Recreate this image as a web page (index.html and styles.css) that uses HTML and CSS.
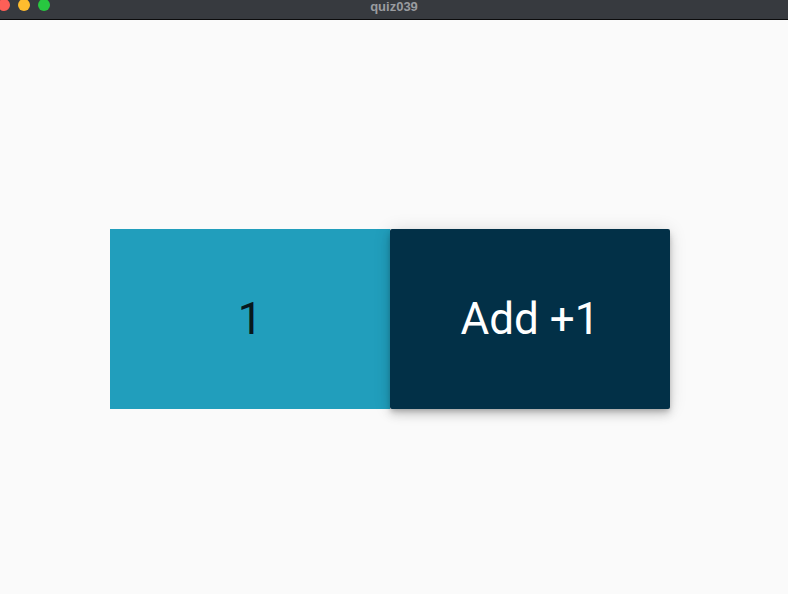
FILE: index.html
```html
<!DOCTYPE html>
<html>
<head>
<meta charset="utf-8">
<link rel="stylesheet" href="styles.css">
</head>
<body>
<div class="titlebar">
  <div class="lights">
    <span class="light red"></span>
    <span class="light yellow"></span>
    <span class="light green"></span>
  </div>
  <div class="title">quiz039</div>
</div>
<main class="content">
  <div class="row">
    <div class="count">1</div>
    <button class="add">Add +1</button>
  </div>
</main>
</body>
</html>
```
FILE: styles.css
```css
html, body {
  margin: 0;
  padding: 0;
  width: 788px;
  height: 594px;
  overflow: hidden;
  background: #fafafa;
}
.titlebar {
  position: relative;
  height: 19px;
  background: #373a3f;
  border-bottom: 1px solid #0b0b0c;
  display: flex;
  align-items: flex-start;
  justify-content: center;
}
.lights {
  position: absolute;
  left: -2px;
  top: -1px;
  display: flex;
  gap: 8px;
}
.light {
  width: 12px;
  height: 12px;
  border-radius: 50%;
  display: block;
}
.red { background: #fe5f57; }
.yellow { background: #febc2e; }
.green { background: #28c840; }
.title {
  font-family: "Liberation Sans", Arial, sans-serif;
  font-weight: bold;
  font-size: 13px;
  line-height: 13px;
  color: #9a9ca0;
  margin-top: 0;
}
.content {
  height: 574px;
  display: flex;
  align-items: center;
  justify-content: center;
}
.row {
  display: flex;
  margin-top: 24px;
  margin-right: 8px;
}
.count {
  width: 280px;
  height: 180px;
  background: #219ebc;
  color: #08181d;
  font-family: Roboto, sans-serif;
  font-size: 44px;
  display: flex;
  align-items: center;
  justify-content: center;
}
.add {
  width: 280px;
  height: 180px;
  border: none;
  border-radius: 2px;
  background: #023047;
  color: #ffffff;
  font-family: Roboto, sans-serif;
  font-size: 44px;
  padding: 0;
  box-shadow: 0 3px 5px -1px rgba(0,0,0,0.2), 0 6px 10px 0 rgba(0,0,0,0.14), 0 1px 18px 0 rgba(0,0,0,0.12);
}
```
